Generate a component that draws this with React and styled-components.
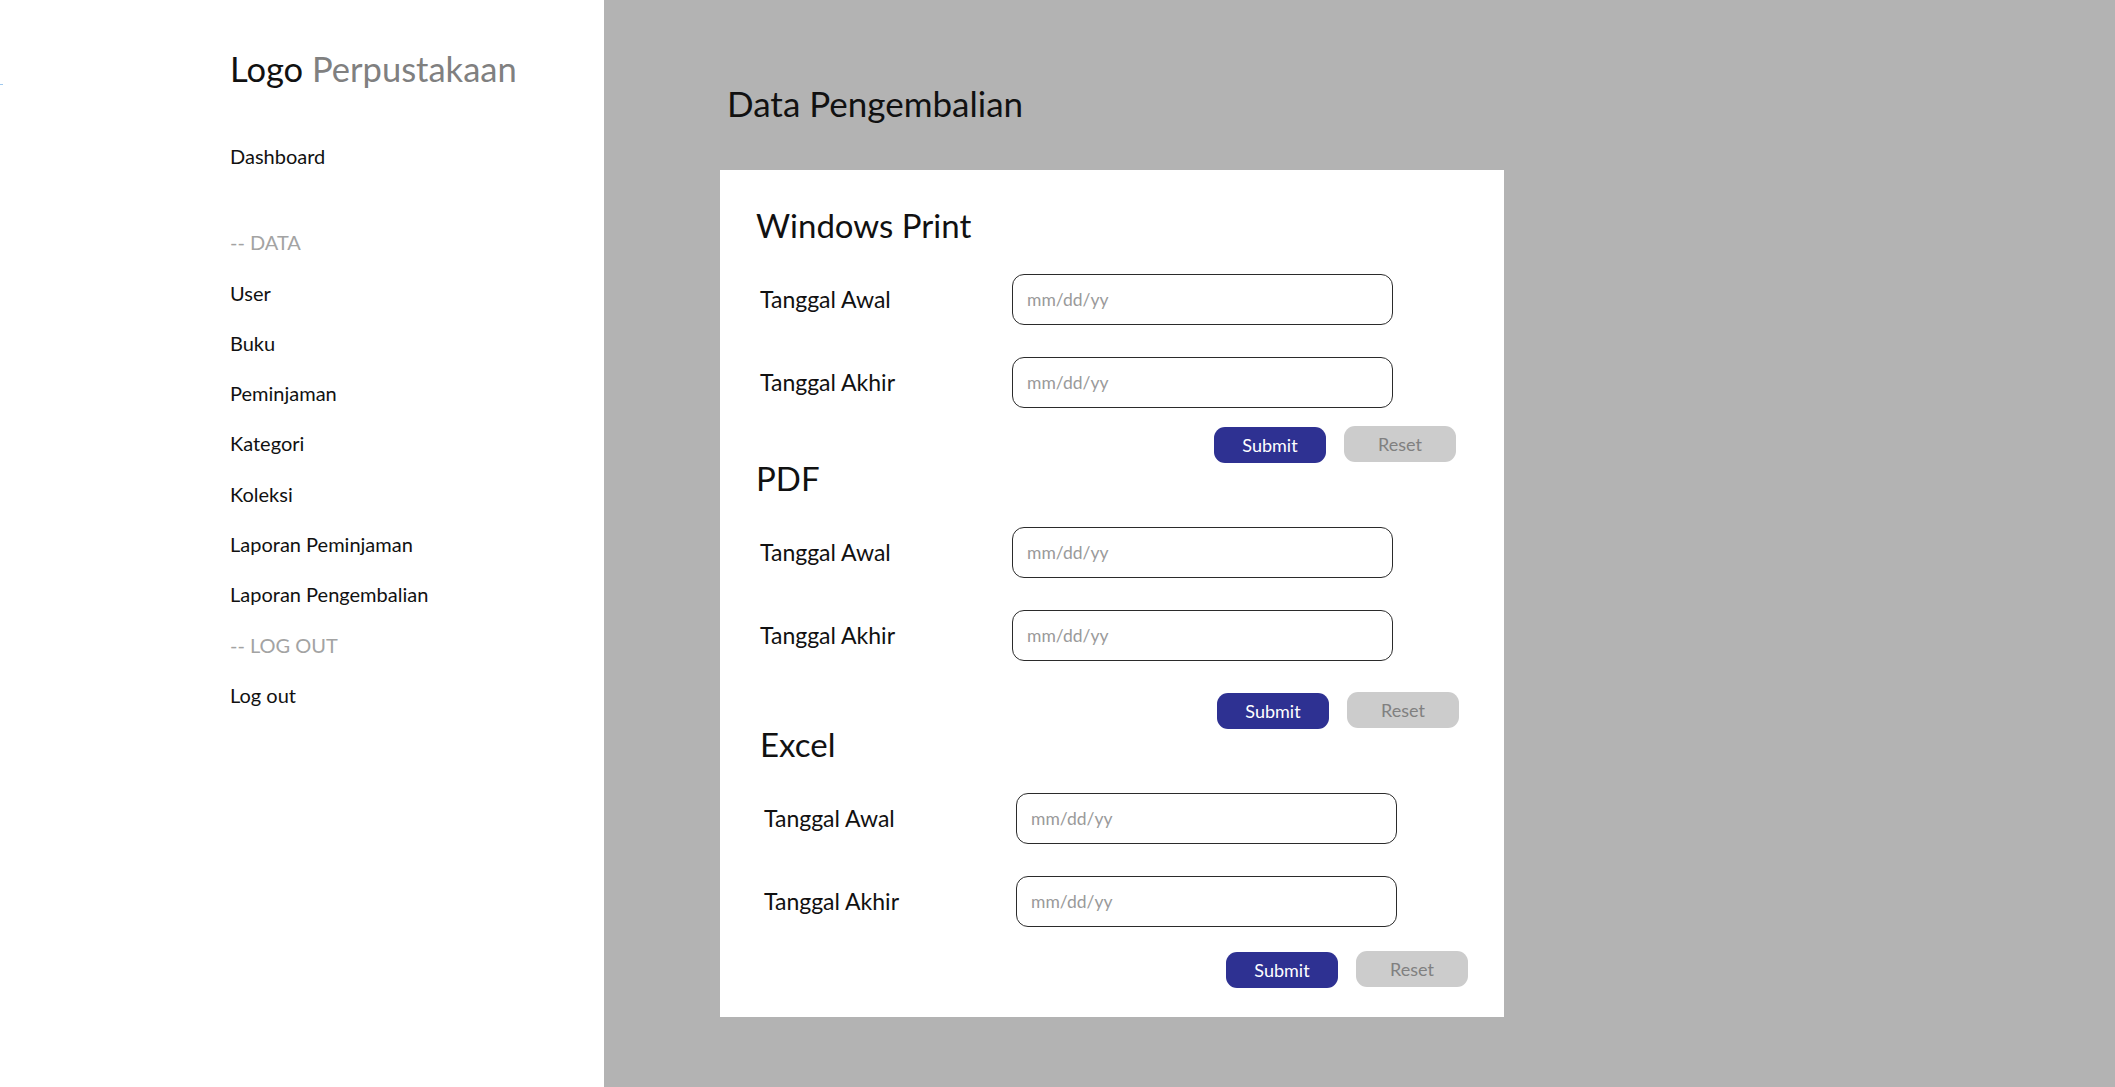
import styled, { createGlobalStyle } from "styled-components";

const GlobalStyle = createGlobalStyle`
  html, body {
    margin: 0;
    padding: 0;
    background: #b3b3b3;
  }
  body {
    font-family: Lato, "Open Sans", sans-serif;
    color: #000;
  }
  * {
    box-sizing: border-box;
  }
`;

const menu = [
  { label: "-- DATA", muted: true },
  { label: "User" },
  { label: "Buku" },
  { label: "Peminjaman" },
  { label: "Kategori" },
  { label: "Koleksi" },
  { label: "Laporan Peminjaman" },
  { label: "Laporan Pengembalian" },
  { label: "-- LOG OUT", muted: true },
  { label: "Log out" },
];

const sections = [
  { title: "Windows Print", pad: 36, gap: 19, right: 48 },
  { title: "PDF", pad: 36, gap: 32, right: 45 },
  { title: "Excel", pad: 40, gap: 25, right: 36 },
];

function ExportSection({ title, pad, gap, right }) {
  return (
    <Section $pad={pad}>
      <SectionTitle>{title}</SectionTitle>
      <Fields>
        <FieldRow>
          <FieldLabel>Tanggal Awal</FieldLabel>
          <DateInput type="text" placeholder="mm/dd/yy" />
        </FieldRow>
        <FieldRow>
          <FieldLabel>Tanggal Akhir</FieldLabel>
          <DateInput type="text" placeholder="mm/dd/yy" />
        </FieldRow>
      </Fields>
      <Actions $gap={gap} $right={right}>
        <SubmitBtn type="button">Submit</SubmitBtn>
        <ResetBtn type="button">Reset</ResetBtn>
      </Actions>
    </Section>
  );
}

function App() {
  return (
    <>
      <GlobalStyle />
      <Layout>
        <Sidebar>
          <EdgeMark />
          <Logo>
            Logo <LogoMuted>Perpustakaan</LogoMuted>
          </Logo>
          <DashboardLink>Dashboard</DashboardLink>
          <Menu>
            {menu.map((item) => (
              <MenuItem key={item.label} $muted={item.muted}>
                {item.label}
              </MenuItem>
            ))}
          </Menu>
        </Sidebar>
        <Main>
          <PageTitle>Data Pengembalian</PageTitle>
          <Card>
            {sections.map((s) => (
              <ExportSection key={s.title} {...s} />
            ))}
          </Card>
        </Main>
      </Layout>
    </>
  );
}

export default App;

const Layout = styled.div`
  display: flex;
  width: 100%;
  min-height: 1087px;
`;

const Sidebar = styled.aside`
  position: relative;
  width: 604px;
  flex-shrink: 0;
  background: #ffffff;
  padding: 48px 0 0 230px;
  display: flex;
  flex-direction: column;
`;

const EdgeMark = styled.span`
  position: absolute;
  left: 0;
  top: 84px;
  width: 3px;
  height: 1px;
  background: #9fc9ee;
`;

const Logo = styled.div`
  font-size: 34.5px;
  line-height: 42px;
  color: #111;
  white-space: nowrap;
`;

const LogoMuted = styled.span`
  color: #808080;
`;

const DashboardLink = styled.div`
  margin-top: 41px;
  margin-bottom: 36px;
  font-size: 20px;
  line-height: 50.3px;
  color: #111;
`;

const Menu = styled.nav`
  display: flex;
  flex-direction: column;
`;

const MenuItem = styled.div`
  font-size: 20px;
  line-height: 50.3px;
  color: ${(p) => (p.$muted ? "#a3a3a3" : "#111")};
  white-space: nowrap;
`;

const Main = styled.main`
  flex: 1;
  background: #b3b3b3;
  padding: 88px 0 0 116px;
  display: flex;
  flex-direction: column;
`;

const PageTitle = styled.h1`
  margin: 0 0 52px 7px;
  font-size: 35px;
  font-weight: 400;
  line-height: 30px;
  color: #111;
`;

const Card = styled.div`
  width: 784px;
  background: #ffffff;
  padding: 40px 0 29px 0;
  display: flex;
  flex-direction: column;
`;

const Section = styled.section`
  display: flex;
  flex-direction: column;
  padding-left: ${(p) => p.$pad}px;
`;

const SectionTitle = styled.h2`
  margin: 0 0 34px 0;
  font-size: 33px;
  font-weight: 400;
  line-height: 30px;
  color: #111;
`;

const Fields = styled.div`
  display: flex;
  flex-direction: column;
  gap: 32px;
  padding-left: 4px;
`;

const FieldRow = styled.div`
  display: flex;
  align-items: center;
`;

const FieldLabel = styled.label`
  width: 252px;
  flex-shrink: 0;
  font-size: 23px;
  color: #111;
  margin-bottom: 2px;
`;

const DateInput = styled.input`
  width: 381px;
  height: 51px;
  border: 1.5px solid #2b2b2b;
  border-radius: 12px;
  padding: 0 14px;
  font-family: Lato, "Open Sans", sans-serif;
  font-size: 17.5px;
  color: #333;
  background: #fff;
  outline: none;

  &::placeholder {
    color: #9a9a9a;
  }
`;

const Actions = styled.div`
  display: flex;
  justify-content: flex-end;
  align-items: center;
  gap: 18px;
  margin-top: ${(p) => p.$gap}px;
  padding-right: ${(p) => p.$right}px;
`;

const BaseBtn = styled.button`
  width: 112px;
  height: 36px;
  border: none;
  border-radius: 11px;
  font-family: Lato, "Open Sans", sans-serif;
  font-size: 18px;
  cursor: pointer;
`;

const SubmitBtn = styled(BaseBtn)`
  background: #2e3192;
  color: #ffffff;
`;

const ResetBtn = styled(BaseBtn)`
  background: #cccccc;
  color: #808080;
  margin-top: -3px;
`;
